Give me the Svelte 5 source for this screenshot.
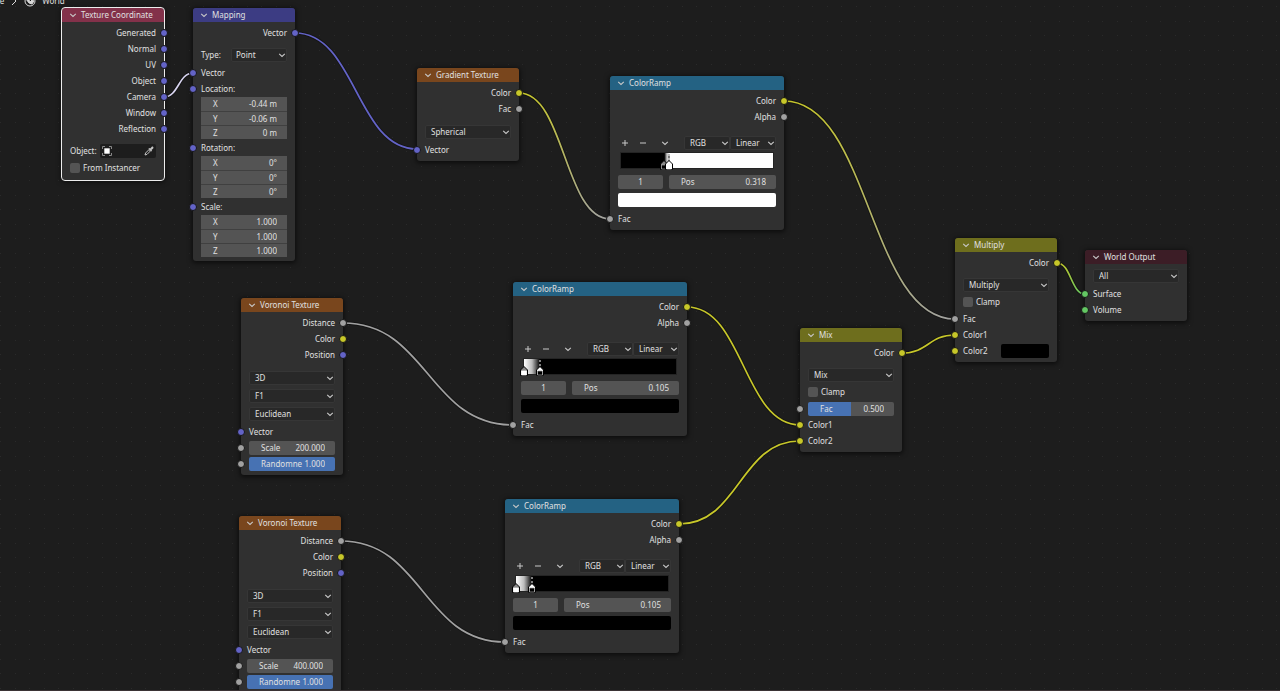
<script lang="ts">
	type Socket = { name: string; type: string; field?: string; fill?: number; swatch?: string };

	const nodes = [
		{
			id: 'coord', title: 'Texture Coordinate', kind: 'input', x: 62, y: 8, selected: true,
			outputs: ['Generated', 'Normal', 'UV', 'Object', 'Camera', 'Window', 'Reflection'].map((name) => ({ name, type: 'vector' })),
			picker: 'Object:', checks: ['From Instancer']
		},
		{
			id: 'mapping', title: 'Mapping', kind: 'vector', x: 193, y: 8,
			outputs: [{ name: 'Vector', type: 'vector' }],
			selects: [{ label: 'Type:', value: 'Point' }],
			inputs: [{ name: 'Vector', type: 'vector' }],
			vectors: [
				{ name: 'Location:', values: ['-0.44 m', '-0.06 m', '0 m'] },
				{ name: 'Rotation:', values: ['0°', '0°', '0°'] },
				{ name: 'Scale:', values: ['1.000', '1.000', '1.000'] }
			]
		},
		{
			id: 'gradient', title: 'Gradient Texture', kind: 'texture', x: 417, y: 68,
			outputs: [{ name: 'Color', type: 'color' }, { name: 'Fac', type: 'value' }],
			selects: [{ value: 'Spherical' }],
			inputs: [{ name: 'Vector', type: 'vector' }]
		},
		ramp('ramp1', 610, 76, { pos: '0.318', swatch: '#fff', from: 0.285, to: 0.318, a: '#000', b: '#fff' }),
		ramp('ramp2', 513, 282, { pos: '0.105', swatch: '#000', from: 0, to: 0.105, a: '#fff', b: '#000' }),
		ramp('ramp3', 505, 499, { pos: '0.105', swatch: '#000', from: 0, to: 0.105, a: '#fff', b: '#000' }),
		voronoi('voronoi1', 241, 298, '200.000'),
		voronoi('voronoi2', 239, 516, '400.000'),
		{
			id: 'mix', title: 'Mix', kind: 'color', x: 800, y: 328,
			outputs: [{ name: 'Color', type: 'color' }],
			selects: [{ value: 'Mix' }],
			checks: ['Clamp'],
			inputs: [
				{ name: 'Fac', type: 'value', field: '0.500', fill: 50 },
				{ name: 'Color1', type: 'color' },
				{ name: 'Color2', type: 'color' }
			]
		},
		{
			id: 'multiply', title: 'Multiply', kind: 'color', x: 955, y: 238,
			outputs: [{ name: 'Color', type: 'color' }],
			selects: [{ value: 'Multiply' }],
			checks: ['Clamp'],
			inputs: [
				{ name: 'Fac', type: 'value' },
				{ name: 'Color1', type: 'color' },
				{ name: 'Color2', type: 'color', swatch: '#000' }
			]
		},
		{
			id: 'output', title: 'World Output', kind: 'output', x: 1085, y: 250,
			outputs: [],
			selects: [{ value: 'All' }],
			inputs: [{ name: 'Surface', type: 'shader' }, { name: 'Volume', type: 'shader' }]
		}
	] as any[];

	const links = [
		{ from: [164, 97], to: [193, 73], a: '#d8d4f0', b: '#d8d4f0' },
		{ from: [295, 33], to: [417, 149], a: '#6363c7', b: '#6363c7' },
		{ from: [519, 93], to: [610, 219], a: '#c7c729', b: '#a1a1a1' },
		{ from: [784, 101], to: [955, 319], a: '#c7c729', b: '#a1a1a1' },
		{ from: [343, 323], to: [513, 425], a: '#a1a1a1', b: '#a1a1a1' },
		{ from: [341, 541], to: [505, 642], a: '#a1a1a1', b: '#a1a1a1' },
		{ from: [687, 307], to: [800, 425], a: '#c7c729', b: '#c7c729' },
		{ from: [679, 524], to: [800, 441], a: '#c7c729', b: '#c7c729' },
		{ from: [902, 353], to: [955, 335], a: '#c7c729', b: '#c7c729' },
		{ from: [1057, 263], to: [1085, 294], a: '#c7c729', b: '#63c763' }
	];

	function ramp(id: string, x: number, y: number, stops: object) {
		return {
			id, title: 'ColorRamp', kind: 'converter', x, y, ramp: stops,
			outputs: [{ name: 'Color', type: 'color' }, { name: 'Alpha', type: 'value' }],
			inputs: [{ name: 'Fac', type: 'value' }]
		};
	}

	function voronoi(id: string, x: number, y: number, scale: string) {
		return {
			id, title: 'Voronoi Texture', kind: 'texture', x, y,
			outputs: [{ name: 'Distance', type: 'value' }, { name: 'Color', type: 'color' }, { name: 'Position', type: 'vector' }],
			selects: [{ value: '3D' }, { value: 'F1' }, { value: 'Euclidean' }],
			inputs: [
				{ name: 'Vector', type: 'vector' },
				{ name: 'Scale', type: 'value', field: scale },
				{ name: 'Randomne', type: 'value', field: '1.000', fill: 100 }
			]
		};
	}

	function curve([x1, y1]: number[], [x2, y2]: number[]) {
		const mid = (x1 + x2) / 2;
		return `M${x1} ${y1}C${mid} ${y1} ${mid} ${y2} ${x2} ${y2}`;
	}

	// blended in linear light, so the middle of the ramp is a light grey
	function rampFill({ from, to, a, b }: any) {
		return `linear-gradient(90deg, ${a} ${from * 100}%, #bcbcbc ${(from + to) * 50}%, ${b} ${to * 100}%)`;
	}
</script>

{#snippet chevron()}
	<svg class="chevron" viewBox="0 0 8 8" aria-hidden="true"><path d="M1.2 2.8 4 5.4 6.8 2.8" /></svg>
{/snippet}

{#snippet dropdown(name: string, value: string)}
	<span class="select">
		<select aria-label={name}><option>{value}</option></select>
		{@render chevron()}
	</span>
{/snippet}

{#snippet number(name: string, value: string, fill = 0)}
	<label class="field" style={fill ? `--fill: ${fill}%` : undefined}>
		<span>{name}</span>
		<input type="text" {value} />
	</label>
{/snippet}

{#snippet marker(at: number, color: string, active: boolean)}
	<svg class="marker" style="left: {at * 100}%" viewBox="0 0 8 17" aria-hidden="true">
		{#if active}
			<path d="M4 1V9" stroke="#000" stroke-width="1" />
			<path d="M4 1V9" stroke="#fff" stroke-width="1" stroke-dasharray="2 2" />
		{/if}
		<path d="M.5 16.5V11L4 7.5 7.5 11v5.500z" fill={active ? '#fff' : '#888'} stroke="#000" />
		<path d="M1.500 12h5v4h-5z" fill={color} stroke={color === '#000' ? '#aaa' : '#fff'} stroke-width=".7" />
	</svg>
{/snippet}

<main class="editor">
	<svg class="links" aria-hidden="true">
		<defs>
			<pattern id="dots" width="29" height="29" patternUnits="userSpaceOnUse">
				<path d="M0 6h1v1H0zM15 6h1v1h-1zM0 21h1v1H0zM15 21h1v1h-1z" fill="#2a2a2a" />
			</pattern>
			{#each links as { from, to, a, b }, i}
				<linearGradient id="link{i}" gradientUnits="userSpaceOnUse" x1={from[0]} y1={from[1]} x2={to[0]} y2={to[1]}>
					<stop stop-color={a} />
					<stop offset="1" stop-color={b} />
				</linearGradient>
			{/each}
		</defs>
		<rect width="100%" height="100%" fill="url(#dots)" />
		{#each links as { from, to }, i}
			<path d={curve(from, to)} stroke="#141414" stroke-width="3.500" />
			<path d={curve(from, to)} stroke="url(#link{i})" stroke-width="1.700" />
		{/each}
	</svg>

	<nav class="breadcrumb">
		<span>Scene</span>
		<svg viewBox="0 0 8 10" width="8" height="10"><path d="M2 1l4 4-4 4" /></svg>
		<svg viewBox="0 0 12 12" width="12" height="12">
			<circle cx="6" cy="6" r="5" />
			<path d="M2 4l3 1 1 2 2-2 2 1-2 3-3-1z" fill="#d8d8d8" />
		</svg>
		<span>World</span>
	</nav>

	{#each nodes as node (node.id)}
		<section
			class="node {node.kind}"
			class:wide={node.ramp}
			class:selected={node.selected}
			style="left: {node.x}px; top: {node.y}px"
		>
			<header>{@render chevron()}<span>{node.title}</span></header>

			{#if node.outputs.length}
				<div class="outputs">
					{#each node.outputs as out}
						<div class="row out">{out.name}<i class="socket {out.type}"></i></div>
					{/each}
				</div>
			{/if}

			{#if node.picker}
				<div class="prop">
					<span class="caption">{node.picker}</span>
					<button class="picker" aria-label="Pick object">
						<svg viewBox="0 0 10 10" width="10" height="10">
							<path d="M.5 3V.5H3M7 .5h2.500V3M9.500 7v2.500H7M3 9.500H.5V7" fill="none" stroke="#888" />
							<path d="M2.300 2.300h5.400v5.400H2.300z" fill="#fff" />
						</svg>
						<svg viewBox="0 0 10 10" width="10" height="10">
							<path d="M1 9l.6-2L5 3.600 6.400 5 3 8.400z" fill="none" stroke="#c4c4c4" />
							<path d="M4.400 2.800l.9-.8.8.6L7.600.9c1-.9 2.500.5 1.600 1.500L7.500 4l.6.800-.9.800z" fill="#c4c4c4" />
						</svg>
					</button>
				</div>
			{/if}

			{#each node.selects ?? [] as { label, value }}
				<div class="prop">
					{#if label}<span class="caption">{label}</span>{/if}
					{@render dropdown(label ?? node.title, value)}
				</div>
			{/each}

			{#each node.checks ?? [] as check}
				<label class="check"><input type="checkbox" />{check}</label>
			{/each}

			{#if node.ramp}
				{@const r = node.ramp}
				<div class="ramp">
					<div class="tools">
						<button aria-label="Add stop"><svg viewBox="0 0 8 8"><path d="M4 1v6M1 4h6" /></svg></button>
						<button aria-label="Remove stop"><svg viewBox="0 0 8 8"><path d="M1 4h6" /></svg></button>
						<button class="more" aria-label="Ramp tools">{@render chevron()}</button>
						<div class="modes">
							{@render dropdown('Color mode', 'RGB')}
							{@render dropdown('Interpolation', 'Linear')}
						</div>
					</div>
					<div class="bar" style="background: {rampFill(r)}">
						{@render marker(r.from, r.a, false)}
						{@render marker(r.to, r.b, true)}
					</div>
					<div class="stop">
						<input class="index" type="text" value="1" aria-label="Active stop" />
						{@render number('Pos', r.pos)}
					</div>
					<button class="swatch" style="background: {r.swatch}" aria-label="Stop color"></button>
				</div>
			{/if}

			<div class="inputs">
				{#each (node.inputs ?? []) as Socket[] as input}
					<div class="row">
						<i class="socket {input.type}"></i>
						{#if input.field}
							{@render number(input.name, input.field, input.fill)}
						{:else}
							{input.name}
						{/if}
						{#if input.swatch}
							<button class="swatch small" style="background: {input.swatch}" aria-label={input.name}></button>
						{/if}
					</div>
				{/each}
				{#each node.vectors ?? [] as { name, values }}
					<div class="row"><i class="socket vector"></i>{name}</div>
					<div class="group">
						{#each values as value, i}
							{@render number('XYZ'[i], value)}
						{/each}
					</div>
				{/each}
			</div>
		</section>
	{/each}
</main>

<style>
	:global(body) {
		margin: 0;
		background: #1d1d1d;
	}
	.editor {
		position: relative;
		box-sizing: border-box;
		height: 100vh;
		overflow: hidden;
		border-bottom: 1px solid #3a3335;
		background: #1d1d1d;
		color: #e0e0e0;
		font: 8px/16px 'Noto Sans', 'DejaVu Sans', sans-serif;
	}
	.links {
		position: absolute;
		inset: 0;
		width: 100%;
		height: 100%;
		fill: none;
	}
	.breadcrumb {
		position: absolute;
		top: -7px;
		left: -18px;
		display: flex;
		align-items: center;
		gap: 6px;
	}
	.breadcrumb svg {
		fill: none;
		stroke: #d8d8d8;
	}
	button,
	input,
	select {
		box-sizing: border-box;
		margin: 0;
		padding: 0;
		border: 0;
		background: none;
		color: inherit;
		font: inherit;
	}

	.node {
		position: absolute;
		width: 102px;
		padding-bottom: 3px;
		border-radius: 3px;
		background: #303030;
		box-shadow: 0 1px 5px 1px rgba(0, 0, 0, 0.6);
	}
	.wide {
		width: 174px;
	}
	.selected {
		outline: 1px solid #ededed;
	}
	header {
		display: flex;
		align-items: center;
		gap: 4px;
		height: 14px;
		margin-bottom: 3px;
		padding-left: 7px;
		border-radius: 3px 3px 0 0;
	}
	.input header {
		background: #83314a;
	}
	.vector header {
		background: #3c3c83;
	}
	.texture header {
		background: #79461d;
	}
	.converter header {
		background: #246283;
	}
	.color header {
		background: #6e6e1d;
	}
	.output header {
		background: #3c1d26;
	}

	.chevron {
		width: 8px;
		height: 8px;
		fill: none;
		stroke: #c8c8c8;
		stroke-width: 1.1;
	}
	.outputs {
		padding-bottom: 5px;
	}
	.texture .outputs {
		padding-bottom: 6px;
	}
	.inputs {
		padding-top: 1px;
	}
	.row {
		position: relative;
		display: flex;
		align-items: center;
		height: 16px;
		padding: 0 8px;
	}
	.out {
		justify-content: flex-end;
	}
	.socket {
		position: absolute;
		left: -4px;
		width: 6px;
		height: 6px;
		border: 1px solid #161616;
		border-radius: 50%;
	}
	.out .socket {
		left: auto;
		right: -4px;
	}
	.socket.vector {
		background: #6363c7;
	}
	.socket.color {
		background: #c7c729;
	}
	.socket.value {
		background: #a1a1a1;
	}
	.socket.shader {
		background: #63c763;
	}

	.prop {
		display: flex;
		align-items: center;
		height: 18px;
		padding: 0 8px;
	}
	.caption {
		flex: 0 0 30px;
	}
	.select {
		position: relative;
		display: flex;
		flex: 1;
		min-width: 0;
	}
	select {
		width: 100%;
		height: 14px;
		padding: 0 5px;
		border: 1px solid #363636;
		border-radius: 2px;
		background: #282828;
		line-height: 12px;
		appearance: none;
	}
	.caption + .select select {
		padding-left: 4px;
	}
	.select .chevron {
		position: absolute;
		top: 3px;
		right: 1px;
		pointer-events: none;
	}
	.picker {
		display: flex;
		flex: 1;
		align-items: center;
		justify-content: space-between;
		height: 14px;
		padding: 0 2px;
		border-radius: 2px;
		background: #1d1d1d;
	}
	.check {
		display: flex;
		align-items: center;
		gap: 3px;
		height: 16px;
		padding: 0 8px;
	}
	.check input {
		width: 10px;
		height: 10px;
		border-radius: 2px;
		background: #545454;
		appearance: none;
	}

	.field {
		display: flex;
		flex: 1;
		align-items: center;
		min-width: 0;
		height: 14px;
		padding: 0 10px 0 12px;
		border-radius: 2px;
		background: linear-gradient(90deg, #4772b3 var(--fill, 0%), #545454 var(--fill, 0%));
	}
	.field input {
		flex: 1;
		width: 0;
		min-width: 0;
		height: 14px;
		text-align: right;
	}
	.group {
		display: flex;
		flex-direction: column;
		margin: 0 8px 1px;
	}
	.group .field {
		box-sizing: border-box;
		flex: none;
		border-radius: 0;
	}
	.group .field + .field {
		border-top: 1px solid #404040;
	}

	.ramp {
		padding: 5px 8px 3px;
	}
	.tools {
		display: flex;
		align-items: center;
		height: 16px;
		margin-bottom: 2px;
	}
	.tools button {
		display: flex;
		justify-content: center;
		width: 18px;
		margin-left: -2px;
		margin-right: 2px;
	}
	.tools button svg {
		width: 8px;
		height: 8px;
		fill: none;
		stroke: #c8c8c8;
	}
	.tools .more {
		margin-left: 2px;
	}
	.modes {
		display: flex;
		flex: 0 0 92px;
		margin-left: auto;
	}
	.bar {
		position: relative;
		box-sizing: border-box;
		height: 15px;
		margin: 0 3px 7px;
		box-shadow: 0 0 0 1px #242424;
	}
	.marker {
		position: absolute;
		top: 0;
		width: 8px;
		height: 17px;
		margin-left: -4px;
	}
	.stop {
		display: flex;
		gap: 6px;
		margin-bottom: 4px;
	}
	.index {
		width: 45px;
		height: 14px;
		border-radius: 2px;
		background: #545454;
		text-align: center;
	}
	.swatch {
		display: block;
		width: 100%;
		height: 14px;
		border-radius: 2px;
	}
	.small {
		width: 48px;
		margin-left: auto;
	}
</style>
